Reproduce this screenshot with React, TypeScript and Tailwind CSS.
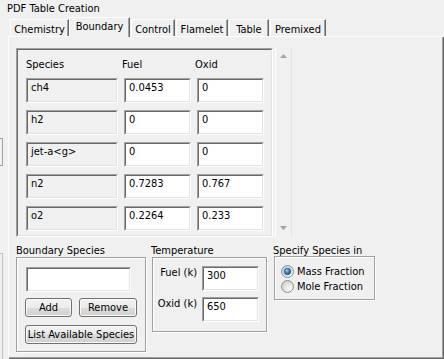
import React from 'react';

type Row = { species: string; fuel: string; oxid: string };

const rows: Row[] = [
  { species: 'ch4', fuel: '0.0453', oxid: '0' },
  { species: 'h2', fuel: '0', oxid: '0' },
  { species: 'jet-a<g>', fuel: '0', oxid: '0' },
  { species: 'n2', fuel: '0.7283', oxid: '0.767' },
  { species: 'o2', fuel: '0.2264', oxid: '0.233' },
];

const tabs = [
  { name: 'Chemistry', cls: 'w-[59px]' },
  { name: 'Boundary', cls: 'w-[61px]', active: true },
  { name: 'Control', cls: 'w-[44px] ml-[1px]' },
  { name: 'Flamelet', cls: 'w-[52px] ml-[1px]' },
  { name: 'Table', cls: 'w-[40px] ml-[1px]' },
  { name: 'Premixed', cls: 'w-[56px] ml-[1px]' },
];

const Field: React.FC<{ value?: string; gray?: boolean; className?: string }> = ({ value, gray, className = '' }) => (
  <div className={`h-[25px] border border-t-[#a0a0a0] border-l-[#a0a0a0] border-r-white border-b-white ${className}`}>
    <div
      className={`h-full border border-t-[#696969] border-l-[#696969] border-r-[#e3e3e3] border-b-[#e3e3e3] pl-[3px] pt-[1px] leading-[13px] whitespace-nowrap overflow-hidden ${gray ? 'bg-[#f0f0f0]' : 'bg-white'}`}
    >
      {value}
    </div>
  </div>
);

const Btn: React.FC<{ label: string; className?: string }> = ({ label, className = '' }) => (
  <button
    className={`h-[19px] rounded-[3px] border border-[#707070] bg-[linear-gradient(#f2f2f2_0%,#ebebeb_50%,#dddddd_50%,#cfcfcf_100%)] shadow-[inset_0_0_0_1px_#fbfbfb] leading-[13px] text-black ${className}`}
  >
    {label}
  </button>
);

const Radio: React.FC<{ checked?: boolean }> = ({ checked }) => (
  <svg width="13" height="13" viewBox="0 0 13 13" className="shrink-0">
    <defs>
      <radialGradient id={checked ? 'rgOn' : 'rgOff'} cx="70%" cy="70%" r="75%">
        <stop offset="0%" stopColor="#fbfbfb" />
        <stop offset="100%" stopColor="#cfcfcf" />
      </radialGradient>
      <radialGradient id="rgDot" cx="40%" cy="35%" r="70%">
        <stop offset="0%" stopColor="#8fd0f5" />
        <stop offset="55%" stopColor="#2a7cc2" />
        <stop offset="100%" stopColor="#174f7f" />
      </radialGradient>
    </defs>
    <circle cx="6.5" cy="6.5" r="6" fill={`url(#${checked ? 'rgOn' : 'rgOff'})`} stroke="#8e8f8f" />
    {checked && <circle cx="6.5" cy="6.5" r="3.3" fill="url(#rgDot)" stroke="#1b4f7a" strokeWidth="0.6" />}
  </svg>
);

const Group: React.FC<{ className?: string; children?: React.ReactNode }> = ({ className = '', children }) => (
  <div className={`border border-[#a0a0a0] shadow-[inset_1px_1px_0_#fff,1px_1px_0_#fff] ${className}`}>{children}</div>
);

export default function App() {
  return (
    <div className="w-[444px] h-[359px] overflow-hidden bg-[#f0f0f0] text-black text-[11px] leading-[13px] font-['DejaVu_Sans_Condensed','Liberation_Sans',sans-serif] flex flex-col">
      <div className="h-[17px] pl-[7px] pt-[2px] shrink-0">PDF Table Creation</div>

      <div className="flex flex-1">
        {/* bits of the window behind */}
        <div className="w-[8px] flex flex-col">
          <div className="mt-[121px] h-[28px] w-[3px] border-y border-r border-[#a0a0a0]" />
          <div className="mt-[87px] flex-1 w-[3px] border-t border-r border-[#c4c4c4]" />
        </div>

        <div className="flex-1 flex flex-col">
          {/* tabs */}
          <div className="h-[19px] flex items-end pl-[2px] shrink-0">
            {tabs.map(t =>
              t.active ? (
                <div
                  key={t.name}
                  className={`${t.cls} h-[20px] -mb-[1px] relative z-10 bg-[#f0f0f0] border-l border-t border-white border-r border-r-[#696969] shadow-[inset_-1px_0_0_#a0a0a0] pt-[2px] text-center`}
                >
                  {t.name}
                </div>
              ) : (
                <div
                  key={t.name}
                  className={`${t.cls} h-[17px] bg-[#f0f0f0] border-l border-t border-white border-r border-r-[#696969] shadow-[inset_-1px_0_0_#a0a0a0] pt-[3px] text-center`}
                >
                  {t.name}
                </div>
              )
            )}
          </div>

          {/* tab page */}
          <div className="flex-1 bg-[#f0f0f0] shadow-[inset_1px_1px_0_#fff,inset_-1px_-1px_0_#696969,inset_-2px_-2px_0_#a0a0a0] pl-[8px] pt-[12px]">
            <div className="flex">
              <div className="w-[257px] h-[189px] border border-t-[#a0a0a0] border-l-[#a0a0a0] border-r-white border-b-white">
                <div className="h-full border border-t-[#696969] border-l-[#696969] border-r-[#e3e3e3] border-b-[#e3e3e3] pl-[8px] pt-[8px]">
                  <div className="flex h-[13px]">
                    <span className="w-[96px]">Species</span>
                    <span className="w-[73px]">Fuel</span>
                    <span>Oxid</span>
                  </div>
                  <div className="mt-[7px] flex flex-col gap-[7px]">
                    {rows.map(r => (
                      <div key={r.species} className="flex gap-[6px]">
                        <Field value={r.species} gray className="w-[92px]" />
                        <Field value={r.fuel} className="w-[67px]" />
                        <Field value={r.oxid} className="w-[67px]" />
                      </div>
                    ))}
                  </div>
                </div>
              </div>
              <div className="ml-[2px] w-[17px] h-[189px] border-l border-white border-r border-r-[#e3e3e3] flex flex-col items-center justify-between pt-[6px] pb-[7px]">
                <svg width="7" height="4" viewBox="0 0 7 4">
                  <path d="M3.5 0 L7 4 L0 4 Z" fill="#a3a3a3" />
                </svg>
                <svg width="7" height="4" viewBox="0 0 7 4">
                  <path d="M0 0 L7 0 L3.5 4 Z" fill="#a3a3a3" />
                </svg>
              </div>
            </div>

            <div className="mt-[7px] flex">
              <div className="w-[130px] flex flex-col">
                <div className="h-[13px]">Boundary Species</div>
                <Group className="h-[95px] pl-[8px] pt-[9px]">
                  <Field className="w-[105px] ml-[1px]" />
                  <div className="mt-[6px] flex gap-[7px]">
                    <Btn label="Add" className="w-[47px]" />
                    <Btn label="Remove" className="w-[58px]" />
                  </div>
                  <Btn label="List Available Species" className="mt-[8px] w-[112px]" />
                </Group>
              </div>

              <div className="ml-[5px] w-[116px] flex flex-col">
                <div className="h-[13px]">Temperature</div>
                <Group className="ml-[1px] h-[75px] pt-[8px]">
                  <div className="flex">
                    <span className="w-[44px] text-right">Fuel (k)</span>
                    <Field value="300" className="ml-[5px] w-[57px]" />
                  </div>
                  <div className="mt-[6px] flex">
                    <span className="w-[44px] text-right">Oxid (k)</span>
                    <Field value="650" className="ml-[5px] w-[57px]" />
                  </div>
                </Group>
              </div>

              <div className="ml-[6px] w-[102px] flex flex-col">
                <div className="h-[13px]">Specify Species in</div>
                <Group className="-mt-[1px] ml-[1px] h-[44px] pl-[6px] pt-[8px] flex flex-col gap-[2px]">
                  <div className="flex items-start gap-[3px] h-[13px]">
                    <Radio checked />
                    <span>Mass Fraction</span>
                  </div>
                  <div className="flex items-start gap-[3px] h-[13px]">
                    <Radio />
                    <span>Mole Fraction</span>
                  </div>
                </Group>
              </div>
            </div>
          </div>
        </div>
      </div>
    </div>
  );
}
